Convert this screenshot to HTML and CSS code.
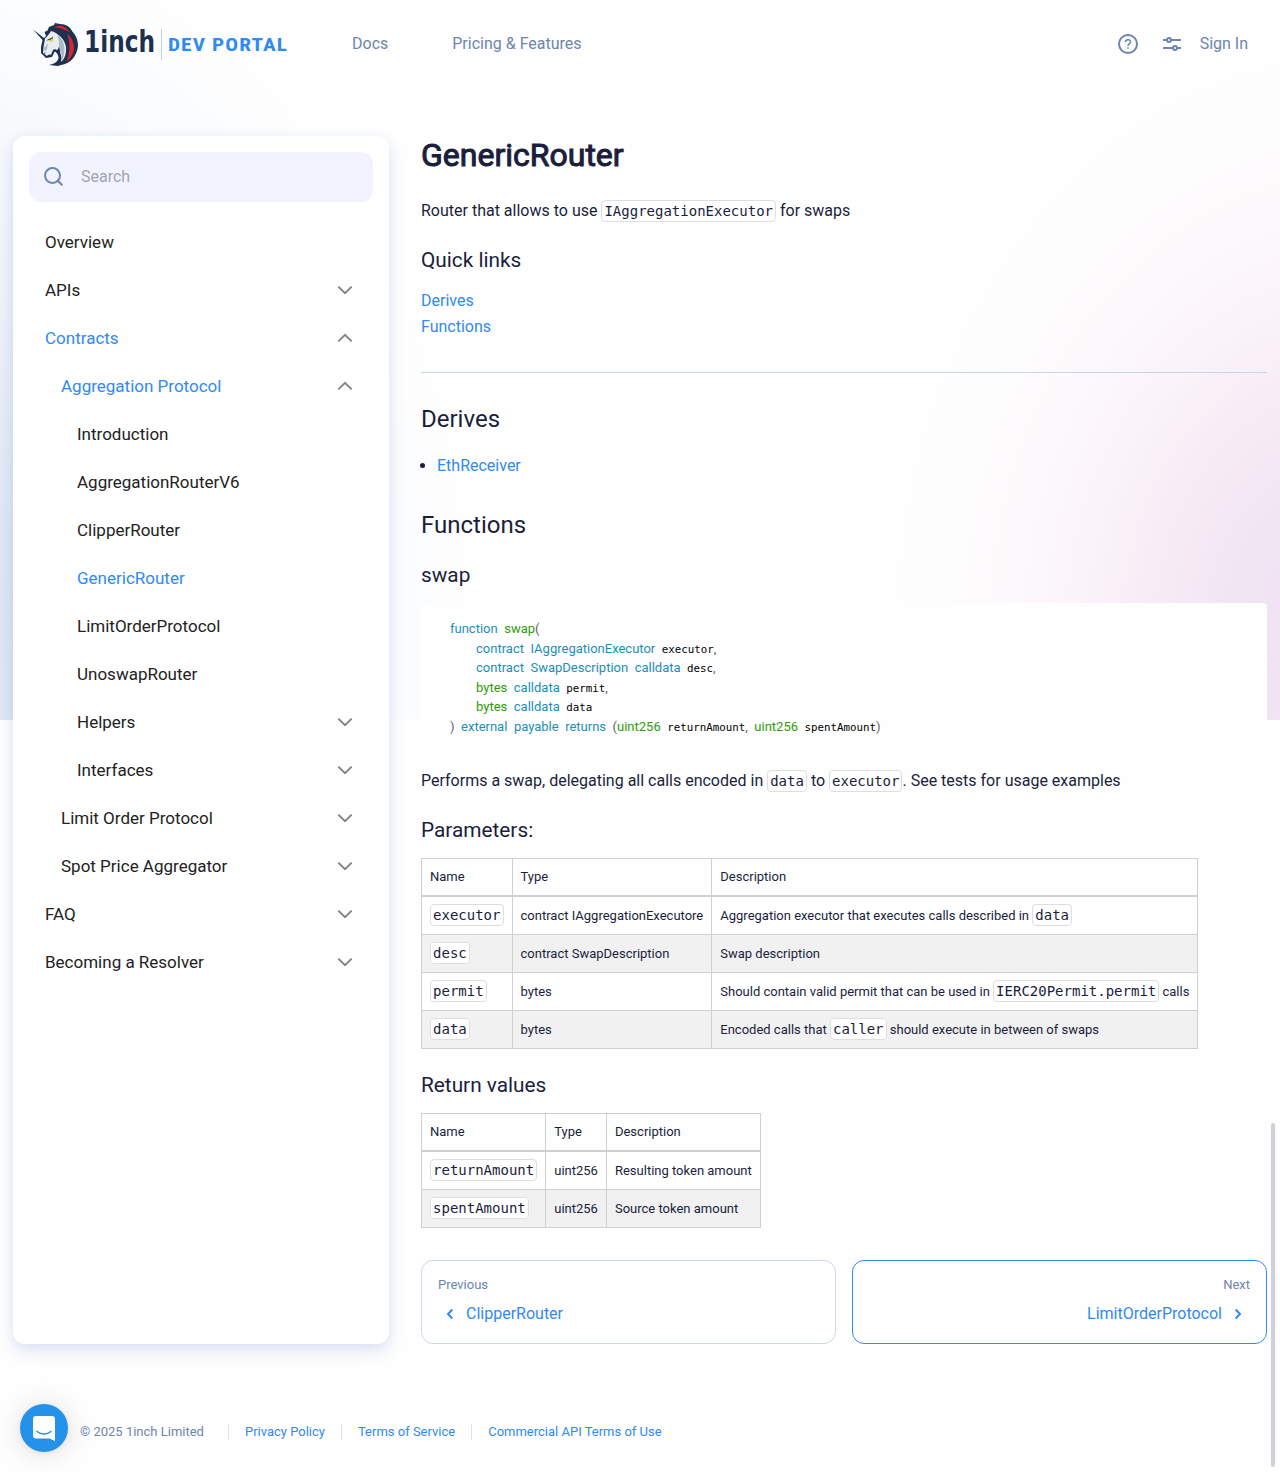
FILE: index.html
```html
<!DOCTYPE html>
<html lang="en">
<head>
<meta charset="utf-8">
<title>GenericRouter | 1inch Dev Portal</title>
<link rel="stylesheet" href="styles.css">
</head>
<body>
<svg class="defs" aria-hidden="true">
  <symbol id="down" viewBox="0 0 16 16"><path d="M1.300 4.600 8 11.200l6.700-6.600" fill="none" stroke="currentColor" stroke-width="2"/></symbol>
  <symbol id="up" viewBox="0 0 16 16"><path d="M1.300 11.400 8 4.800l6.700 6.600" fill="none" stroke="currentColor" stroke-width="2"/></symbol>
</svg>
<header class="header">
  <a class="logo">
    <svg width="260" height="48" viewBox="0 0 260 48">
      <path fill="#1b314f" d="M1 9.500 12 18l2-2-1.500-4 3-1.500L17 7l5-2 1-2 5 1c6 0 10 3 12 7 4 4 6 9 6 15-1 10-8 18-17 19l-3 1-9-1c6-1 10-4 10-10l-4-4-3 6-6 1-5-5 0-6 1.500-7z"/>
      <path fill="#d9242e" d="M22 7.500c6-4 12-1 16 5-5-3-10-5-16-5zM35 14c5 3 7 9 7 15-1 6-4 10-8 13 4-8 5-18 1-28z"/>
      <path fill="#e9edf2" d="M13 18.500 17 14l2-3 3 1c6 3 11 8 12 15 .500 6-1 12-5 15 1-5 0-9-3-11-2-2-4-2-5-1l-2 5-4 1-4-3 .500-6z"/>
      <path fill="#aeb9cb" d="M25 14c7 5 10 15 5 27 0-6-1-10-4-12 2-4 1-10-1-15zM12 28l4-5-1 6-2 3z"/>
      <path fill="#1b314f" d="M27 27c-1 3-3 4-5 4 3 1 5 5 5 9 2-5 1-10 0-13zM14 13l4-1-4 5zM14 20.500l5-2.500 2-1.500-1 5-2-1.500z"/>
      <path fill="#f3cf27" d="M17 20.500 20.500 18 20 21.500l-2 .500z"/>
      <path fill="#1b314f" d="M11.500 33l2-.500-.500 1.500zM15 35.500l4-1.500-2 2.500z"/>
      <text class="logo-name" x="52" y="32" textLength="71" lengthAdjust="spacingAndGlyphs">1inch</text>
      <path d="M129.500 9v31" stroke="#b9d0ee"/>
      <text class="logo-tag" x="136" y="31" textLength="120" lengthAdjust="spacingAndGlyphs">DEV PORTAL</text>
    </svg>
  </a>
  <nav class="top-nav"><a>Docs</a><a>Pricing &amp; Features</a></nav>
  <div class="tools">
    <svg width="20" height="20" viewBox="0 0 20 20" fill="none" stroke="currentColor" stroke-width="2"><circle cx="10" cy="10" r="9"/><path d="M7.500 8.200C7.500 6.700 8.600 5.800 10 5.800s2.500.9 2.500 2.200c0 1.900-2.500 2-2.500 4" stroke-width="1.500"/><path d="M10 13.200v1.600" stroke-width="1.700"/></svg>
    <svg class="sliders" width="18" height="14" viewBox="0 0 18 14" fill="none" stroke="currentColor" stroke-width="2"><path d="M0 3h4M8 3h10M0 11h10M14 11h4"/><circle cx="6" cy="3" r="2"/><circle cx="12" cy="11" r="2"/></svg>
    <a>Sign In</a>
  </div>
</header>

<div class="layout">
  <aside class="sidebar">
    <div class="search">
      <svg width="20" height="20" viewBox="0 0 20 20" fill="none" stroke="currentColor" stroke-width="2"><circle cx="8.500" cy="8.500" r="7.500"/><path d="M13.800 13.800 17.800 17.800" stroke-linecap="round"/></svg>
      <span>Search</span>
    </div>
    <ul class="tree">
      <li>Overview</li>
      <li>APIs<svg><use href="#down"/></svg></li>
      <li class="active">Contracts<svg><use href="#up"/></svg></li>
      <li class="l2 active">Aggregation Protocol<svg><use href="#up"/></svg></li>
      <li class="l3">Introduction</li>
      <li class="l3">AggregationRouterV6</li>
      <li class="l3">ClipperRouter</li>
      <li class="l3 active">GenericRouter</li>
      <li class="l3">LimitOrderProtocol</li>
      <li class="l3">UnoswapRouter</li>
      <li class="l3">Helpers<svg><use href="#down"/></svg></li>
      <li class="l3">Interfaces<svg><use href="#down"/></svg></li>
      <li class="l2">Limit Order Protocol<svg><use href="#down"/></svg></li>
      <li class="l2">Spot Price Aggregator<svg><use href="#down"/></svg></li>
      <li>FAQ<svg><use href="#down"/></svg></li>
      <li>Becoming a Resolver<svg><use href="#down"/></svg></li>
    </ul>
  </aside>

  <main class="content">
    <h1>GenericRouter</h1>
    <p class="intro">Router that allows to use <code>IAggregationExecutor</code> for swaps</p>
    <h3>Quick links</h3>
    <div class="quick"><a>Derives</a><a>Functions</a></div>
    <hr>
    <h2>Derives</h2>
    <ul class="derives"><li><a>EthReceiver</a></li></ul>
    <h2>Functions</h2>
    <h3 class="fn">swap</h3>
<pre class="source"><span class="k">function</span> <span class="t">swap</span><span class="p">(</span>
    <span class="k">contract</span> <span class="k">IAggregationExecutor</span> executor<span class="p">,</span>
    <span class="k">contract</span> <span class="k">SwapDescription</span> <span class="k">calldata</span> desc<span class="p">,</span>
    <span class="t">bytes</span> <span class="k">calldata</span> permit<span class="p">,</span>
    <span class="t">bytes</span> <span class="k">calldata</span> data
<span class="p">)</span> <span class="k">external</span> <span class="k">payable</span> <span class="k">returns</span> <span class="p">(</span><span class="t">uint256</span> returnAmount<span class="p">,</span> <span class="t">uint256</span> spentAmount<span class="p">)</span></pre>
    <p class="desc">Performs a swap, delegating all calls encoded in <code>data</code> to <code>executor</code>. See tests for usage examples</p>
    <h3>Parameters:</h3>
    <table>
      <thead><tr><th>Name</th><th>Type</th><th>Description</th></tr></thead>
      <tbody>
        <tr><td><code>executor</code></td><td>contract IAggregationExecutore</td><td>Aggregation executor that executes calls described in <code>data</code></td></tr>
        <tr><td><code>desc</code></td><td>contract SwapDescription</td><td>Swap description</td></tr>
        <tr><td><code>permit</code></td><td>bytes</td><td>Should contain valid permit that can be used in <code>IERC20Permit.permit</code> calls</td></tr>
        <tr><td><code>data</code></td><td>bytes</td><td>Encoded calls that <code>caller</code> should execute in between of swaps</td></tr>
      </tbody>
    </table>
    <h3 class="returns">Return values</h3>
    <table>
      <thead><tr><th>Name</th><th>Type</th><th>Description</th></tr></thead>
      <tbody>
        <tr><td><code>returnAmount</code></td><td>uint256</td><td>Resulting token amount</td></tr>
        <tr><td><code>spentAmount</code></td><td>uint256</td><td>Source token amount</td></tr>
      </tbody>
    </table>
    <nav class="pager">
      <a class="page"><small>Previous</small><span><svg width="8" height="12" viewBox="0 0 8 12"><path d="M6.300 1.500 2 6l4.300 4.500"/></svg>ClipperRouter</span></a>
      <a class="page next"><small>Next</small><span>LimitOrderProtocol<svg width="8" height="12" viewBox="0 0 8 12"><path d="M1.700 1.500 6 6l-4.300 4.500"/></svg></span></a>
    </nav>
  </main>
</div>

<footer class="footer">
  <span>© 2025 1inch Limited</span><a>Privacy Policy</a><a>Terms of Service</a><a>Commercial API Terms of Use</a>
</footer>
<button class="chat" aria-label="Open chat">
  <svg width="22" height="25" viewBox="0 0 22 25"><path fill="#fff" d="M3 0h16a3 3 0 0 1 3 3v22l-5.500-2.500H3a3 3 0 0 1-3-3V3a3 3 0 0 1 3-3z"/><path d="M4 15.500c4 3.300 10 3.300 14 0" fill="none" stroke="#2491eb" stroke-width="1.600" stroke-linecap="round"/></svg>
</button>
<div class="scroll-thumb"></div>
</body>
</html>
```
FILE: styles.css
```css
* { box-sizing: border-box; }
body {
  margin: 0;
  height: 1472px;
  position: relative;
  overflow: hidden;
  color: #1a1e3c;
  font: 16px/26px Roboto, sans-serif;
  background:
    radial-gradient(ellipse 460px 590px at 1350px 640px, #eedff2 0%, #f1e4f3 24%, #f7ebf5 42%, #fbf5fa 62%, #fefdfe 88%, #fff0 100%),
    radial-gradient(ellipse 530px 680px at -60px 620px, #dbe5f1 0%, #e1e8f4 20%, #eff3fa 50%, #f9fbfe 80%, #fff0 100%);
  background-color: #fefefe;
  background-size: 1280px 720px;
  background-repeat: no-repeat;
}
a { color: #2f8af5; }
h1, h2, h3, p, ul, pre { margin: 0; padding: 0; font-weight: 400; }
.defs { display: block; width: 0; height: 0; }

.header { display: flex; align-items: center; height: 88px; padding: 0 32px; color: #6c86ad; }
.header a { color: inherit; }
.logo { width: 320px; height: 48px; }
.logo svg { display: block; }
.logo-name { font: 700 30px "DejaVu Sans", sans-serif; fill: #1b314f; }
.logo-tag { font: 700 19px "Roboto Condensed", Roboto, sans-serif; letter-spacing: 1px; fill: #2f8af5; }
.top-nav { display: flex; gap: 64px; }
.tools { display: flex; align-items: center; margin-left: auto; }
.tools .sliders { margin: 0 19px 0 25px; }

.layout { display: flex; gap: 32px; padding: 48px 13px 0; }
.sidebar {
  width: 376px;
  height: 1208px;
  flex: none;
  padding: 16px;
  background: #fff;
  border-radius: 12px;
  box-shadow: 0 8px 16px rgba(47, 90, 170, .14), 0 0 12px rgba(47, 90, 170, .05);
}
.search {
  display: flex;
  align-items: center;
  gap: 17px;
  height: 50px;
  padding-left: 15px;
  border-radius: 12px;
  background: #f1f4fe;
  color: #9fa4b3;
}
.search svg { color: #6c86ad; }
.tree { padding: 16px 20px 0 16px; list-style: none; color: #222; }
.tree li { display: flex; align-items: center; justify-content: space-between; height: 48px; font-size: 17px; }
.tree svg { width: 16px; height: 16px; color: #858585; }
.tree .l2 { padding-left: 16px; }
.tree .l3 { padding-left: 32px; }
.tree .active { color: #2f8af5; }

.content { width: 846px; }
h1 { font-size: 32px; line-height: 38px; -webkit-text-stroke: 1px; }
h2 { font-size: 24px; line-height: 32px; }
h3 { font-size: 20.800px; line-height: 28px; }
code {
  padding: 2px;
  border: 1px solid #dedede;
  border-radius: 4px;
  background: #fff;
  font: 14px/1 "DejaVu Sans Mono", monospace;
}
.intro { margin: 24px 0 22px; }
.quick { display: flex; flex-direction: column; margin-top: 14px; }
hr { margin: 32px 0 30px; border: 0; border-top: 1px solid #c3d6f1; }
.derives { margin: 18px 0 30px; padding-left: 16px; }
.fn { margin-top: 20px; }
.source {
  height: 144px;
  margin-top: 14px;
  padding: 17px 29px;
  border-radius: 4px;
  background: #fefefe;
  color: #000;
  font: 10.800px/19.500px "DejaVu Sans Mono", monospace;
}
.source span { font: 13px/1 Roboto, sans-serif; }
.source .k { color: #1990b8; }
.source .t { color: #2f9c0a; }
.source .p { color: #5f6364; }
.desc { margin: 21px 0 22px; }
table { margin-top: 14px; border-collapse: collapse; font-size: 13px; line-height: 21px; }
th, td { height: 38px; padding: 0 8px; border: 1px solid #d0d0d0; text-align: left; font-weight: 400; }
th { height: 37px; padding-bottom: 1px; border-bottom-width: 2px; }
tbody tr:first-child td { height: 39px; }
tbody tr { background: #fff; }
tbody tr:nth-child(even) { background: #f1f1f1; }
td:first-child code { padding: 2px 2.060px; }
.returns { margin-top: 22px; }
.pager { display: grid; grid-template-columns: 1fr 1fr; gap: 16px; margin-top: 32px; }
.page { height: 84px; padding: 15px 16px; border: 1px solid #c8d8ef; border-radius: 12px; }
.page small { display: block; font-size: 13px; line-height: 18px; color: #6c86ad; }
.page span { display: flex; align-items: center; gap: 12px; margin-top: 7px; padding: 0 8px; }
.page svg { fill: none; stroke: currentColor; stroke-width: 2; }
.next { border-color: #2f8af5; text-align: right; }
.next span { justify-content: flex-end; }

.footer { display: flex; align-items: center; height: 16px; margin: 80px 0 0 80px; font-size: 13px; line-height: 16px; color: #6c86ad; }
.footer span { margin-right: 24px; }
.footer a { padding: 0 16px; border-left: 1px solid #dde2ea; }
.chat {
  position: absolute;
  left: 20px;
  top: 1404px;
  display: grid;
  place-items: center;
  width: 48px;
  height: 48px;
  padding: 0;
  border: 0;
  border-radius: 50%;
  background: #2491eb;
  box-shadow: 0 1px 6px rgba(0, 0, 0, .06), 0 2px 28px rgba(0, 0, 0, .13);
}
.scroll-thumb { position: absolute; left: 1271px; top: 1123px; width: 4px; height: 344px; border-radius: 2px; background: #d0d0d7; }
```
